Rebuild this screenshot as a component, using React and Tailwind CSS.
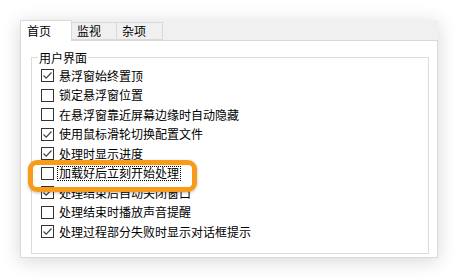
import React from 'react';

const options = [
  { label: '悬浮窗始终置顶', checked: true },
  { label: '锁定悬浮窗位置', checked: false },
  { label: '在悬浮窗靠近屏幕边缘时自动隐藏', checked: false },
  { label: '使用鼠标滑轮切换配置文件', checked: true },
  { label: '处理时显示进度', checked: true },
  { label: '加载好后立刻开始处理', checked: false, focused: true },
  { label: '处理结束后自动关闭窗口', checked: true },
  { label: '处理结束时播放声音提醒', checked: false },
  { label: '处理过程部分失败时显示对话框提示', checked: true },
];

const CheckBox = ({ checked }) => (
  <div className="w-[13px] h-[13px] border border-[#333333] bg-white shrink-0 flex items-center justify-center">
    {checked && (
      <svg width="11" height="11" viewBox="0 0 11 11">
        <path d="M1.5 5.5 L4.2 8.2 L9.5 2.5" fill="none" stroke="#444" strokeWidth="1.2" />
      </svg>
    )}
  </div>
);

const App = () => {
  return (
    <div
      className="relative w-[458px] h-[278px] bg-white pt-[20px] pl-[20px] text-[12px] text-black leading-none"
      style={{ fontFamily: '"Noto Sans CJK SC", "Noto Sans", sans-serif' }}
    >
      <div className="w-[418px] h-[238px] flex flex-col shadow-[0_3px_18px_rgba(0,0,0,0.16)]">
        {/* Tabs */}
        <div className="h-[20px] bg-[#f0f0f0] flex items-end relative z-10">
          <div className="w-[52px] h-[21px] -mb-[1px] bg-white border border-b-0 border-[#d9d9d9] flex items-center pl-[6px]">
            首页
          </div>
          <div className="w-[45px] h-[18px] border border-l-0 border-[#d9d9d9] flex items-center pl-[5px]">
            监视
          </div>
          <div className="w-[46px] h-[18px] border border-l-0 border-[#d9d9d9] flex items-center pl-[5px]">
            杂项
          </div>
        </div>

        {/* Content */}
        <div className="flex-1 bg-white border border-[#d9d9d9] pl-[10px] pr-[8px] pt-[16px] pb-[3px] flex">
          <div className="relative flex-1 border border-[#dcdcdc] pl-[9px] pt-[8px]">
            <div className="absolute -top-[7px] left-[6px] bg-white px-[1px] h-[13px] flex items-center">
              用户界面
            </div>
            {options.map((opt) => (
              <div key={opt.label} className="h-[19.5px] flex items-center gap-[3px]">
                <CheckBox checked={opt.checked} />
                <span
                  className={
                    opt.focused
                      ? 'border border-dotted border-black px-[1px] h-[15px] flex items-center'
                      : 'px-[2px]'
                  }
                >
                  {opt.label}
                </span>
              </div>
            ))}
          </div>
        </div>
      </div>

      {/* highlight */}
      <div className="absolute left-[28px] top-[160px] w-[169px] h-[32px] rounded-[9px] border-[5px] border-[#f99b1a] shadow-[0_1px_3px_rgba(0,0,0,0.25)]" />
    </div>
  );
};

export default App;
